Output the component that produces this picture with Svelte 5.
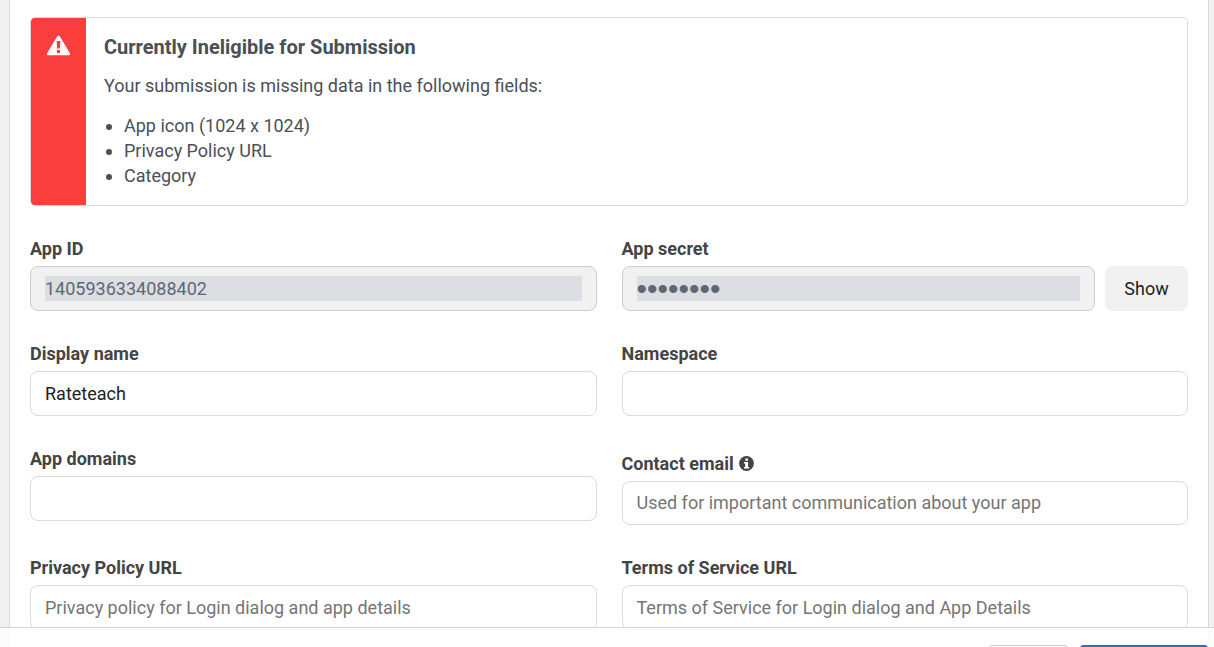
<script>
  const missing = ['App icon (1024 x 1024)', 'Privacy Policy URL', 'Category'];
  let secretShown = $state(false);
</script>

<div class="page">
  <main class="panel">
    <section class="alert" role="alert">
      <div class="alert-side">
        <svg width="25" height="21" viewBox="0 0 25 21" aria-hidden="true">
          <path d="M11.4 1.1 Q12.5 -0.3 13.6 1.1 L23.9 18.3 Q24.6 20.2 22.9 20.2 H2.1 Q0.4 20.2 1.1 18.3 Z" fill="#fff" />
          <path d="M10.7 6 h3.6 l-0.4 7.5 h-2.8 z M10.9 15 h3.2 v3 h-3.2 z" fill="#fa3e3e" />
        </svg>
      </div>
      <div class="alert-body">
        <h2>Currently Ineligible for Submission</h2>
        <p>Your submission is missing data in the following fields:</p>
        <ul>
          {#each missing as item}
            <li>{item}</li>
          {/each}
        </ul>
      </div>
    </section>

    <form class="fields">
      <div class="field">
        <label for="app-id">App ID</label>
        <input id="app-id" type="text" value="1405936334088402" disabled />
      </div>
      <div class="field">
        <label for="secret">App secret</label>
        <div class="with-button">
          <input id="secret" type={secretShown ? 'text' : 'password'} value="12345678" disabled />
          <button type="button" class="show" onclick={() => (secretShown = !secretShown)}>Show</button>
        </div>
      </div>

      <div class="field">
        <label for="name">Display name</label>
        <input id="name" type="text" value="Rateteach" />
      </div>
      <div class="field">
        <label for="namespace">Namespace</label>
        <input id="namespace" type="text" />
      </div>

      <div class="field">
        <label for="domains">App domains</label>
        <input id="domains" type="text" />
      </div>
      <div class="field info-field">
        <label for="email">
          Contact email
          <svg width="15" height="15" viewBox="0 0 15 15" aria-hidden="true">
            <circle cx="7.5" cy="7.5" r="7.4" fill="#444" />
            <path d="M6.2 2.5 h2.8 v2.3 h-2.8 z M5 6 h4 v5 h1.2 v1.4 H5 V11 h1.2 V7.4 H5 z" fill="#fff" />
          </svg>
        </label>
        <input id="email" type="email" placeholder="Used for important communication about your app" />
      </div>

      <div class="field">
        <label for="privacy">Privacy Policy URL</label>
        <input id="privacy" type="url" placeholder="Privacy policy for Login dialog and app details" />
      </div>
      <div class="field">
        <label for="terms">Terms of Service URL</label>
        <input id="terms" type="url" placeholder="Terms of Service for Login dialog and App Details" />
      </div>
    </form>
  </main>

  <footer class="actions">
    <button type="button" class="secondary" aria-label="Discard"></button>
    <button type="button" class="primary" aria-label="Save"></button>
  </footer>
</div>

<style>
  :global(body) {
    background: #f1f1f1;
    overflow: hidden;
  }
  .page {
    height: 100vh;
    overflow: hidden;
    padding: 0 5px 0 9px;
    box-sizing: border-box;
    font-family: Roboto, 'Liberation Sans', sans-serif;
    font-size: 18px;
    line-height: 25px;
    color: #4b4f56;
  }
  .panel {
    min-height: 100vh;
    box-sizing: border-box;
    padding: 17px 20px 30px;
    background: #fff;
    border: solid #dadada;
    border-width: 0 1px;
  }
  .alert {
    display: flex;
    border: 1px solid #dadada;
    border-radius: 5px;
    overflow: hidden;
  }
  .alert-side {
    flex: none;
    width: 55px;
    display: flex;
    justify-content: center;
    padding-top: 17px;
    box-sizing: border-box;
    background: #fa3e3e;
  }
  .alert-body {
    padding: 17px 18px;
  }
  h2 {
    margin: 0 0 13px;
    font-size: 20px;
    line-height: 25px;
    font-weight: 700;
  }
  p {
    margin: 0 0 15px;
  }
  ul {
    margin: 0;
    padding-left: 20px;
  }
  .fields {
    display: grid;
    grid-template-columns: 1fr 1fr;
    gap: 30px 25px;
    margin-top: 30px;
  }
  .field {
    display: flex;
    flex-direction: column;
    gap: 5px;
  }
  label {
    color: #444;
    font-weight: 700;
  }
  input {
    width: 100%;
    min-width: 0;
    height: 45px;
    box-sizing: border-box;
    padding: 9px 14px;
    border: 1px solid #dadada;
    border-radius: 8px;
    background: #fff;
    color: #1c1e21;
    font: inherit;
  }
  input::placeholder {
    color: #757575;
  }
  input:disabled {
    border-color: #cbcccc;
    background: linear-gradient(#dddee3, #dddee3) content-box, #f1f1f1;
    color: #606770;
  }
  input[type='password'] {
    font-family: 'Liberation Sans', sans-serif;
    font-size: 30px;
  }
  .with-button {
    display: flex;
    gap: 10px;
  }
  .show {
    flex: none;
    width: 83px;
    border: 0;
    border-radius: 8px;
    background: #f1f1f1;
    color: #1c1e21;
    font: inherit;
  }
  .info-field {
    padding-top: 5px;
  }
  .info-field label {
    display: flex;
    align-items: center;
    gap: 5px;
  }
  .info-field input {
    height: 44px;
    padding: 8px 14px 9px;
  }
  .actions {
    position: fixed;
    inset: auto 0 0;
    height: 20px;
    box-sizing: border-box;
    display: flex;
    align-items: flex-start;
    justify-content: flex-end;
    gap: 12px;
    padding: 17px 6px 0;
    overflow: hidden;
    background: rgba(255, 255, 255, 0.8);
    background-clip: padding-box;
    border-top: 1px solid #d4d5d6;
  }
  .actions button {
    flex: none;
    height: 45px;
    padding: 0;
    border-radius: 3px;
  }
  .secondary {
    width: 79px;
    border: 1px solid #ccc9d3;
    background: #fff;
  }
  .primary {
    width: 128px;
    border: 1px solid #4267b2;
    background: #4267b2;
  }
</style>
